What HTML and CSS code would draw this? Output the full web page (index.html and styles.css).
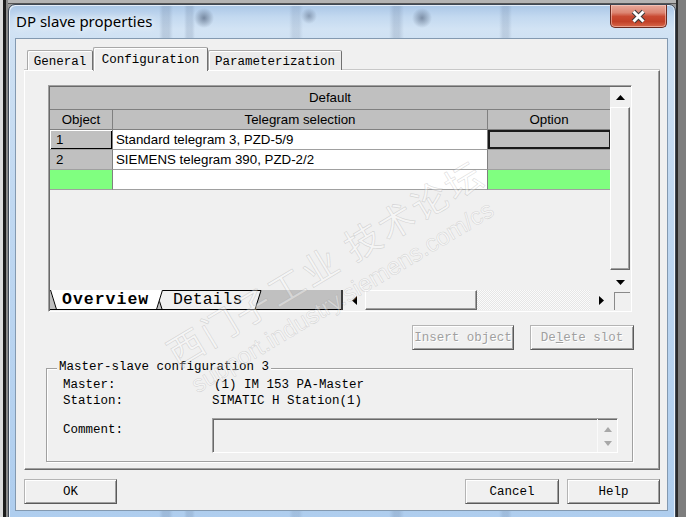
FILE: index.html
```html
<!DOCTYPE html>
<html>
<head>
<meta charset="utf-8">
<title>DP slave properties</title>
<link rel="stylesheet" href="styles.css">
</head>
<body>
<div class="desk">
  <div class="window">
    <div class="titlebar">
      <div class="title">DP slave properties</div>
      <div class="close">
        <svg width="17" height="15" viewBox="0 0 17 15"><path d="M3.5 2.5 L13.5 12.5 M13.5 2.5 L3.5 12.5" stroke="#3a3a3a" stroke-width="5"/><path d="M3.5 2.5 L13.5 12.5 M13.5 2.5 L3.5 12.5" stroke="#fff" stroke-width="3"/></svg>
      </div>
    </div>
    <div class="client">
      <div class="tabs">
        <div class="tab tab-general">General</div>
        <div class="tab tab-active">Configuration</div>
        <div class="tab tab-param">Parameterization</div>
      </div>
      <div class="panel">
        <div class="grid-frame">
          <div class="grid-body">
            <div class="table">
              <div class="hdr-default">Default</div>
              <div class="row row-head">
                <div class="c c-obj">Object</div>
                <div class="c c-tel">Telegram selection</div>
                <div class="c c-opt">Option</div>
              </div>
              <div class="row">
                <div class="c c-obj obj-focus">1</div>
                <div class="c c-tel">Standard telegram 3, PZD-5/9</div>
                <div class="c c-opt opt-focus"></div>
              </div>
              <div class="row">
                <div class="c c-obj">2</div>
                <div class="c c-tel">SIEMENS telegram 390, PZD-2/2</div>
                <div class="c c-opt"></div>
              </div>
              <div class="row">
                <div class="c c-obj green"></div>
                <div class="c c-tel"></div>
                <div class="c c-opt green"></div>
              </div>
            </div>
            <div class="vscroll">
              <div class="sb-btn"><svg width="9" height="5" viewBox="0 0 9 5"><path d="M4.5 0 L9 5 L0 5 Z" fill="#000"/></svg></div>
              <div class="vthumb"></div>
              <div class="sb-btn sb-down"><svg width="9" height="5" viewBox="0 0 9 5"><path d="M0 0 L9 0 L4.5 5 Z" fill="#000"/></svg></div>
            </div>
          </div>
          <div class="grid-foot">
            <div class="sheets">
              <svg class="sheets-bg" width="291" height="20" viewBox="0 0 291 20">
                <rect width="291" height="20" fill="#c0c0c0"/>
                <polygon points="106,0 211,0 205,19 112,19" fill="#f0f0f0"/>
                <polyline points="106,0.5 211,0.5 205,19.5" stroke="#000" fill="none"/>
                <polyline points="106,0.5 112,19" stroke="#000" fill="none"/>
                <polygon points="0,0 113,0 107,19 6,19" fill="#fff"/>
                <polyline points="0.5,0 6.5,19.5 106.5,19.5 112.5,0" stroke="#000" fill="none"/>
                <line x1="0" y1="19.5" x2="291" y2="19.5" stroke="#000"/>
              </svg>
              <div class="sheet-labels"><span class="sheet-on">Overview</span><span class="sheet-off">Details</span></div>
            </div>
            <div class="hscroll">
              <div class="hbtn"><svg width="5" height="9" viewBox="0 0 5 9"><path d="M5 0 L5 9 L0 4.5 Z" fill="#000"/></svg></div>
              <div class="hthumb"></div>
              <div class="htrack"></div>
              <div class="hbtn"><svg width="5" height="9" viewBox="0 0 5 9"><path d="M0 0 L5 4.5 L0 9 Z" fill="#000"/></svg></div>
            </div>
            <div class="corner"><div class="corner-line"></div></div>
          </div>
        </div>
        <div class="actions">
          <div class="btn btn-disabled btn-insert">Insert object</div>
          <div class="btn btn-disabled btn-delete">De<u>l</u>ete slot</div>
        </div>
        <div class="group">
          <div class="legend">Master-slave configuration 3</div>
          <div class="info">
            <div>Master:</div><div class="val-master">(1) IM 153 PA-Master</div>
            <div>Station:</div><div>SIMATIC H Station(1)</div>
          </div>
          <div class="comment-row">
            <div class="comment-label">Comment:</div>
            <div class="comment-box">
              <div class="comment-text"></div>
              <div class="comment-spin">
                <svg width="8" height="5" viewBox="0 0 8 5"><path d="M4 0 L8 5 L0 5 Z" fill="#a8a8a8"/></svg>
                <svg width="8" height="5" viewBox="0 0 8 5"><path d="M0 0 L8 0 L4 5 Z" fill="#a8a8a8"/></svg>
              </div>
            </div>
          </div>
        </div>
      </div>
      <div class="footer">
        <div class="btn btn-ok">OK</div>
        <div class="btn btn-cancel">Cancel</div>
        <div class="btn btn-help">Help</div>
      </div>
    </div>
  </div>
  <div class="watermark">
    <div class="wm-cn">西门子工业 技术论坛</div>
    <div class="wm-url">support.industry.siemens.com/cs</div>
  </div>
</div>
</body>
</html>
```

FILE: styles.css
```css
* { box-sizing: border-box; }
html, body { margin: 0; padding: 0; }
body {
  width: 686px;
  height: 517px;
  overflow: hidden;
  background: #a9a9a9;
  font-family: "Liberation Mono", "DejaVu Sans Mono", monospace;
  font-size: 12.5px;
  color: #000;
}

.desk {
  position: relative;
  width: 686px;
  height: 517px;
  overflow: hidden;
  padding: 4px 0 0 8px;
  background:
    linear-gradient(to right, #dcdcdc 0 3px, #1c1c1c 3px 6px, #8a8a8a 6px 8px, transparent 8px 676px, #2b2b2b 676px 678px, #7e7e7e 678px),
    linear-gradient(to bottom, #b4b4b4 0 3px, #555 3px 4px, #9a9a9a 4px);
}

/* ---------- window frame ---------- */
.window {
  width: 668px;
  height: 530px;
  border: 1px solid #3e4855;
  border-radius: 7px 7px 0 0;
  padding: 0 7px 0 6px;
  display: flex;
  flex-direction: column;
  background:
    radial-gradient(circle 10px at 195px 13px, rgba(55,70,95,.55), transparent),
    radial-gradient(circle 8px at 300px 11px, rgba(55,70,95,.4), transparent),
    radial-gradient(circle 10px at 413px 13px, rgba(55,70,95,.5), transparent),
    linear-gradient(to right, transparent 150px, rgba(90,110,140,.2) 154px 160px, transparent 164px 175px, rgba(90,110,140,.18) 178px 183px, transparent 186px 280px, rgba(90,110,140,.15) 284px 290px, transparent 294px 380px, rgba(90,110,140,.2) 385px 390px, transparent 395px 490px, rgba(90,110,140,.18) 494px 499px, transparent 503px),
    linear-gradient(to bottom, #a9c6e6 0, #c3d9f0 12px, #d2e3f4 24px, #cfe1f3 34px, #c0d8f1 200px, #aecdee 100%);
  box-shadow: inset 1px 1px 0 rgba(255,255,255,.7), inset -1px 0 0 rgba(255,255,255,.7);
}

.titlebar {
  height: 33px;
  flex-shrink: 0;
  display: flex;
  align-items: flex-start;
}
.title {
  margin: 6px 0 0 1px;
  font-family: "Noto Sans", "Open Sans", sans-serif;
  font-size: 15px;
  line-height: 20px;
  color: #000;
  text-shadow: 0 0 6px #fff, 0 0 10px #eef5fc;
}
.close {
  margin-left: auto;
  margin-right: 1px;
  width: 57px;
  height: 23px;
  border: 1px solid #6a2a20;
  border-top: none;
  border-radius: 0 0 5px 5px;
  background: linear-gradient(to bottom, #e8aa9c 0, #dc8572 35%, #c94a32 52%, #c24027 75%, #d7684b 100%);
  box-shadow: inset 0 0 0 1px rgba(255,220,210,.5);
  display: flex;
  align-items: center;
  justify-content: center;
}

/* ---------- client ---------- */
.client {
  width: 653px;
  height: 473px;
  flex-shrink: 0;
  background: #f0f0f0;
  border: 1px solid #8399b0;
  padding: 8px 7px 0 8px;
  display: flex;
  flex-direction: column;
}

.tabs {
  height: 23px;
  flex-shrink: 0;
  display: flex;
  align-items: flex-end;
  padding-left: 3px;
  position: relative;
  z-index: 1;
}
.tab {
  height: 20px;
  display: flex;
  align-items: center;
  justify-content: center;
  padding-top: 2px;
  background: #ebebeb;
  border: 1px solid #a8a8a8;
  border-bottom: none;
  border-right-color: #707070;
  border-radius: 2px 2px 0 0;
  box-shadow: inset 1px 1px 0 #fff;
  white-space: nowrap;
}
.tab-general { width: 66px; }
.tab-active {
  width: 115px;
  height: 24px;
  margin-bottom: -1px;
  background: #f0f0f0;
  padding-top: 0;
}
.tab-param { width: 134px; }

.panel {
  width: 636px;
  height: 400px;
  flex-shrink: 0;
  border: 1px solid;
  border-color: #fff #696969 #696969 #fff;
  box-shadow: inset -1px -1px 0 #a0a0a0, 0 -1px 0 #c8c8c8;
  padding-top: 14px;
  display: flex;
  flex-direction: column;
}

/* ---------- grid ---------- */
.grid-frame {
  margin-left: 23px;
  width: 584px;
  height: 227px;
  flex-shrink: 0;
  border: 1px solid;
  border-color: #a0a0a0 #fff #fff #a0a0a0;
  padding: 1px;
  box-shadow: inset 1px 1px 0 #696969;
  background: #f0f0f0;
  display: flex;
  flex-direction: column;
  font-family: "Liberation Sans", Arial, sans-serif;
  font-size: 13.3px;
}
.grid-body {
  height: 203px;
  display: flex;
}
.table {
  width: 560px;
  display: flex;
  flex-direction: column;
}
.hdr-default {
  height: 23px;
  background: #c0c0c0;
  border-bottom: 1px solid #808080;
  line-height: 22px;
  text-align: center;
}
.row {
  display: flex;
  height: 20px;
}
.c {
  height: 20px;
  line-height: 19px;
  border-right: 1px solid #808080;
  border-bottom: 1px solid #a0a0a0;
  white-space: nowrap;
  overflow: hidden;
}
.c-obj { width: 63px; background: #c0c0c0; padding-left: 6px; }
.c-tel { width: 375px; background: #fff; padding-left: 3px; }
.c-opt { width: 122px; background: #c0c0c0; border-right: none; }
.row-head .c {
  background: #c0c0c0;
  text-align: center;
  padding-left: 0;
  border-bottom-color: #808080;
}
.obj-focus {
  box-shadow: inset 1px 1px 0 #fff, inset -1px -1px 0 #000;
}
.opt-focus {
  box-shadow: inset 2px 2px 0 #1a1a1a, inset -1px -2px 0 #1a1a1a;
}
.green { background: #80ff80; }

.vscroll {
  width: 20px;
  display: flex;
  flex-direction: column;
  background: #f0f0f0;
}
.sb-btn {
  height: 20px;
  flex-shrink: 0;
  display: flex;
  align-items: center;
  justify-content: center;
}
.sb-down { padding-top: 5px; }
.vthumb {
  flex: 1;
  border: 1px solid;
  border-color: #fff #696969 #696969 #fff;
  box-shadow: inset -1px -1px 0 #a0a0a0;
}

.grid-foot {
  height: 20px;
  display: flex;
}
.sheets {
  width: 293px;
  display: grid;
  border-right: 2px solid #3a3a3a;
}
.sheets > * { grid-area: 1 / 1; }
.sheets-bg { display: block; }
.sheet-labels {
  display: flex;
  align-items: center;
  padding-left: 12px;
  font-family: "Liberation Mono", monospace;
  font-size: 16.5px;
  line-height: 20px;
}
.sheet-on { font-weight: bold; letter-spacing: 1px; width: 111px; }

.hscroll {
  width: 269px;
  display: flex;
  background: #f0f0f0;
}
.hbtn {
  width: 22px;
  flex-shrink: 0;
  display: flex;
  align-items: center;
  justify-content: center;
}
.hthumb {
  width: 112px;
  flex-shrink: 0;
  border: 1px solid;
  border-color: #fff #696969 #696969 #fff;
  box-shadow: inset -1px -1px 0 #a0a0a0;
}
.htrack {
  flex: 1;
  background: repeating-conic-gradient(#fbfbfb 0 25%, #e6e6e6 0 50%) 0 0 / 2px 2px;
}
.corner {
  width: 18px;
  padding: 2px 0 0 2px;
  background: #f0f0f0;
}
.corner-line {
  height: 100%;
  border-top: 1px solid #8a8a8a;
  border-left: 1px solid #8a8a8a;
}

/* ---------- buttons ---------- */
.btn {
  height: 25px;
  flex-shrink: 0;
  display: flex;
  align-items: center;
  justify-content: center;
  background: #f0f0f0;
  border: 1px solid;
  border-color: #b4b4b4 #5a5a5a #5a5a5a #b4b4b4;
  box-shadow: inset 1px 1px 0 #fff, inset -1px -1px 0 #a0a0a0;
  white-space: nowrap;
}
.btn-disabled {
  color: #a0a0a0;
  text-shadow: 1px 1px 0 #fff;
}
.btn-insert { width: 102px; }
.btn-delete { width: 104px; }
.btn-ok { width: 93px; margin-right: auto; }
.btn-cancel { width: 94px; }
.btn-help { width: 93px; }

.actions {
  display: flex;
  justify-content: flex-end;
  gap: 16px;
  margin-top: 13px;
  padding-right: 25px;
}

/* ---------- group box ---------- */
.group {
  margin: 18px 26px 0 21px;
  height: 94px;
  flex-shrink: 0;
  border: 1px solid #a0a0a0;
  box-shadow: inset 1px 1px 0 #fff, 1px 1px 0 #fff;
  padding: 0 14px 0 16px;
  display: flex;
  flex-direction: column;
}
.legend {
  width: fit-content;
  margin: -9px 0 0 -6px;
  padding: 0 2px;
  line-height: 14px;
  background: #f0f0f0;
}
.info {
  margin-top: 3px;
  display: grid;
  grid-template-columns: 149px 1fr;
  line-height: 16px;
}
.val-master { padding-left: 2px; }
.comment-row {
  display: flex;
  margin-top: 9px;
}
.comment-label {
  width: 149px;
  margin-top: 4px;
  line-height: 16px;
}
.comment-box {
  flex: 1;
  height: 35px;
  display: flex;
  border: 1px solid;
  border-color: #a0a0a0 #fff #fff #a0a0a0;
  box-shadow: inset 1px 1px 0 #696969;
  background: #f0f0f0;
}
.comment-text { flex: 1; }
.comment-spin {
  width: 20px;
  border-left: 1px solid #fafafa;
  display: flex;
  flex-direction: column;
  align-items: center;
  justify-content: space-between;
  padding: 8px 0 6px;
}

/* ---------- footer ---------- */
.footer {
  display: flex;
  gap: 8px;
  margin-top: 9px;
}

/* ---------- watermark ---------- */
.watermark {
  position: absolute;
  left: 160px;
  top: 339px;
  transform: rotate(-31deg);
  transform-origin: 0 0;
  pointer-events: none;
  white-space: nowrap;
}
.wm-cn {
  font-family: "Noto Sans CJK SC", sans-serif;
  font-size: 36px;
  line-height: 36px;
  letter-spacing: 3px;
  color: rgba(255,255,255,.35);
  -webkit-text-stroke: 0.7px rgba(140,140,140,.28);
}
.wm-url {
  margin: 10px 0 0 4px;
  font-family: "Liberation Sans", sans-serif;
  font-size: 24px;
  line-height: 24px;
  color: rgba(255,255,255,.35);
  -webkit-text-stroke: 0.6px rgba(140,140,140,.28);
}
```
